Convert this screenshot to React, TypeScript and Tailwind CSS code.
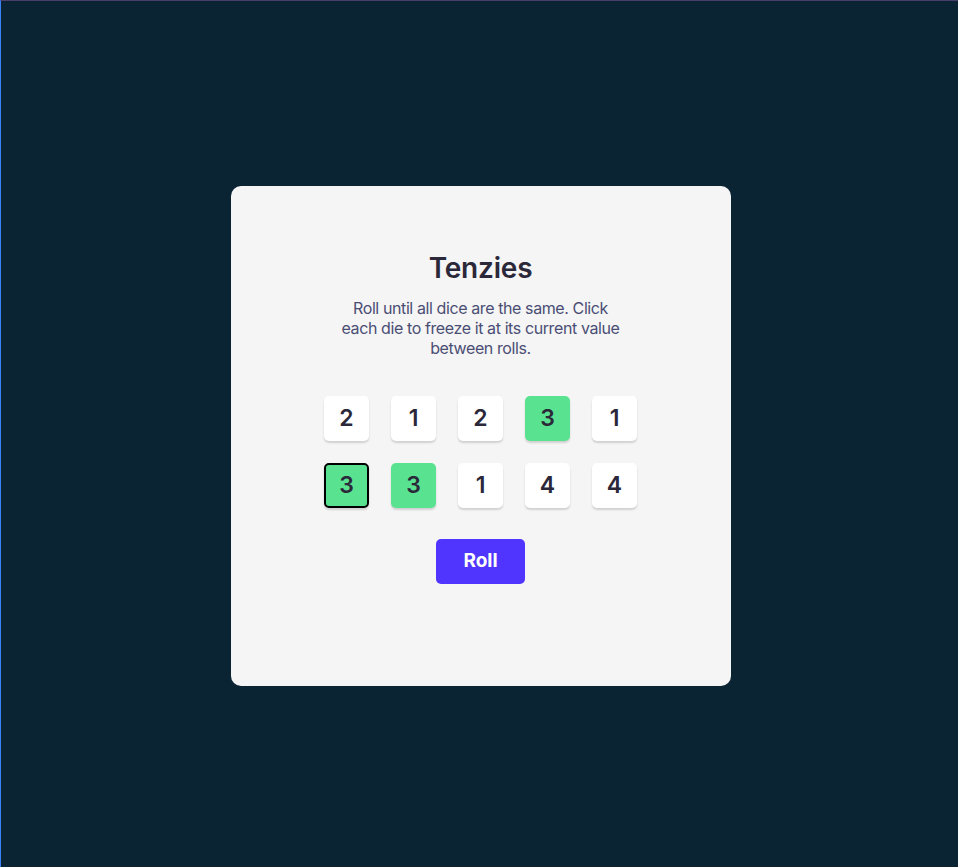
import React from "react";

const dice = [
  { v: 2, held: false },
  { v: 1, held: false },
  { v: 2, held: false },
  { v: 3, held: true },
  { v: 1, held: false },
  { v: 3, held: true, focus: true },
  { v: 3, held: true },
  { v: 1, held: false },
  { v: 4, held: false },
  { v: 4, held: false },
];

export default function App() {
  return (
    <div
      className="w-[958px] h-[867px] bg-[#0B2434] border-l border-l-[#3b82f6] border-t border-t-[#4a3f6b] flex items-center justify-center"
      style={{ fontFamily: "Inter, 'Noto Sans', sans-serif" }}
    >
      <div className="w-[500px] h-[500px] bg-[#F5F5F5] rounded-[10px] flex flex-col items-center pt-[66px] mt-[4px] ml-[2px]">
        <h1 className="text-[28px] leading-[32px] font-semibold text-[#2B283A] tracking-[-0.2px]">Tenzies</h1>
        <p className="mt-[14px] w-[292px] text-center text-[16px] leading-[20px] text-[#4A4E74] tracking-[-0.4px]">
          Roll until all dice are the same. Click each die to freeze it at its current value between rolls.
        </p>
        <div className="mt-[38px] grid grid-cols-5 gap-x-[22px] gap-y-[22px]">
          {dice.map((d, i) => (
            <button
              key={i}
              className={`w-[45px] h-[45px] rounded-[5px] flex items-center justify-center text-[23px] font-semibold text-[#2B283A] shadow-[0_2px_2px_rgba(0,0,0,0.15)] ${
                d.held ? "bg-[#59E391]" : "bg-white"
              } ${d.focus ? "border-2 border-black" : ""}`}
            >
              {d.v}
            </button>
          ))}
        </div>
        <button className="mt-[31px] w-[89px] h-[45px] rounded-[5px] bg-[#5035FF] text-white text-[19px] font-bold">
          Roll
        </button>
      </div>
    </div>
  );
}
